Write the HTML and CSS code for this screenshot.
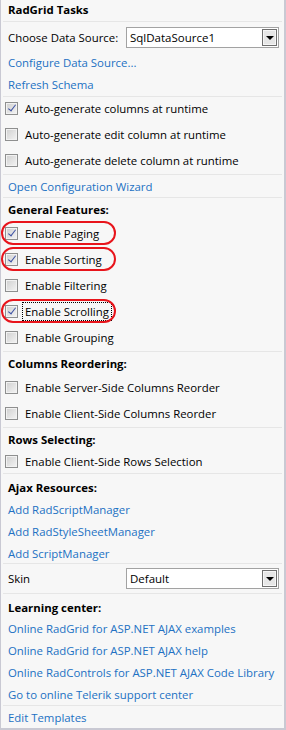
FILE: index.html
```html
<!DOCTYPE html>
<html lang="en">
<head>
    <meta charset="UTF-8">
    <title>RadGrid Tasks</title>
    <link rel="stylesheet" href="styles.css">
</head>
<body>
<div class="panel">
    <div class="title">RadGrid Tasks</div>

    <!-- Origen de datos -->
    <div class="group g-source">
        <div class="field">
            <span class="field-label">Choose Data Source:</span>
            <div class="combo">
                <span class="combo-text">SqlDataSource1</span>
                <span class="combo-btn"><span class="arrow"></span></span>
            </div>
        </div>
        <a class="link" href="#">Configure Data Source...</a>
        <a class="link" href="#">Refresh Schema</a>
    </div>

    <div class="group g-auto">
        <label class="check"><span class="box on"></span><span class="text">Auto-generate columns at runtime</span></label>
        <label class="check"><span class="box"></span><span class="text">Auto-generate edit column at runtime</span></label>
        <label class="check"><span class="box"></span><span class="text">Auto-generate delete column at runtime</span></label>
    </div>

    <div class="group g-wizard">
        <a class="link" href="#">Open Configuration Wizard</a>
    </div>

    <div class="group g-features">
        <div class="head">General Features:</div>
        <label class="check marked"><span class="box on"></span><span class="text">Enable Paging</span></label>
        <label class="check marked"><span class="box on"></span><span class="text">Enable Sorting</span></label>
        <label class="check"><span class="box"></span><span class="text">Enable Filtering</span></label>
        <label class="check marked"><span class="box on"></span><span class="text focus">Enable Scrolling</span></label>
        <label class="check"><span class="box"></span><span class="text">Enable Grouping</span></label>
    </div>

    <div class="group g-reorder">
        <div class="head">Columns Reordering:</div>
        <label class="check"><span class="box"></span><span class="text">Enable Server-Side Columns Reorder</span></label>
        <label class="check"><span class="box"></span><span class="text">Enable Client-Side Columns Reorder</span></label>
    </div>

    <div class="group g-select">
        <div class="head">Rows Selecting:</div>
        <label class="check"><span class="box"></span><span class="text">Enable Client-Side Rows Selection</span></label>
    </div>

    <div class="group g-ajax">
        <div class="head">Ajax Resources:</div>
        <a class="link" href="#">Add RadScriptManager</a>
        <a class="link" href="#">Add RadStyleSheetManager</a>
        <a class="link" href="#">Add ScriptManager</a>
    </div>

    <div class="group g-skin">
        <div class="field">
            <span class="field-label">Skin</span>
            <div class="combo">
                <span class="combo-text">Default</span>
                <span class="combo-btn"><span class="arrow"></span></span>
            </div>
        </div>
    </div>

    <div class="group g-learn">
        <div class="head">Learning center:</div>
        <a class="link" href="#">Online RadGrid for ASP.NET AJAX examples</a>
        <a class="link" href="#">Online RadGrid for ASP.NET AJAX help</a>
        <a class="link" href="#">Online RadControls for ASP.NET AJAX Code Library</a>
        <a class="link" href="#">Go to online Telerik support center</a>
    </div>

    <div class="group g-edit">
        <a class="link" href="#">Edit Templates</a>
    </div>
</div>
</body>
</html>
```

FILE: styles.css
```css
body {
    margin: 0;
}
.panel {
    width: 286px;
    height: 730px;
    box-sizing: border-box;
    background: #f7f7f7;
    border-left: 1px solid #c9c9d3;
    border-right: 2px solid #c9c9d3;
    border-bottom: 2px solid #c9c9d3;
    font-family: "Open Sans", "Noto Sans", sans-serif;
    font-size: 11.4px;
    color: #000;
}
.title {
    height: 21px;
    line-height: 20px;
    padding-left: 7px;
    font-weight: bold;
}
.group {
    margin: 0 2px;
    border-top: 1px solid #e6e6e6;
}

/* filas */
.link,
.head,
.field {
    display: flex;
    align-items: center;
    height: 22px;
    padding-left: 5px;
}
.link {
    color: #2271c3;
    text-decoration: none;
}
.head {
    font-weight: bold;
}
.check {
    display: flex;
    align-items: center;
    height: 22px;
    padding-left: 2px;
    position: relative;
}
.check + .check {
    margin-top: 4px;
}
.head + .check {
    margin-top: 2px;
}
.check .text {
    line-height: 17px;
    padding: 0 2px;
    border: 1px solid transparent;
    margin-left: 4px;
}
.check .focus {
    border: 1px dotted #000;
}
.marked::after {
    content: "";
    position: absolute;
    left: -2px;
    top: -1px;
    width: 111px;
    height: 20px;
    border: 2px solid #e8141b;
    border-radius: 12px;
}

/* casilla */
.box {
    width: 11px;
    height: 11px;
    border: 1px solid #8e8f8f;
    background: linear-gradient(135deg, #cfcfcf, #f4f4f4);
    box-shadow: inset 0 0 0 1px #f2f2f2;
    position: relative;
    flex: none;
}
.box.on::after {
    content: "";
    position: absolute;
    left: 3.5px;
    top: 0.5px;
    width: 3px;
    height: 7px;
    border: solid #3d52a3;
    border-width: 0 1.5px 1.5px 0;
    transform: rotate(38deg);
}

/* combo */
.field-label {
    width: 118px;
    flex: none;
}
.combo {
    width: 151px;
    height: 19px;
    border: 1px solid #a2a2a2;
    background: #fff;
    display: flex;
    align-items: center;
    justify-content: space-between;
}
.combo-text {
    padding-left: 3px;
    font-size: 11.5px;
}
.combo-btn {
    width: 13px;
    height: 15px;
    margin-right: 1px;
    border: 1px solid #6f6f6f;
    background: #e6e6e6;
    box-shadow: inset 0 0 0 1px #f6f6f6;
    display: flex;
    align-items: center;
    justify-content: center;
}
.arrow {
    width: 0;
    height: 0;
    border-left: 4px solid transparent;
    border-right: 4px solid transparent;
    border-top: 4px solid #000;
    margin-top: 1px;
}

/* ajustes por grupo */
.g-source {
    padding: 3px 0 1px;
}
.g-source .field {
    height: 24px;
    margin-bottom: 2px;
}
.g-auto {
    padding-bottom: 3px;
}
.g-features,
.g-reorder {
    padding-bottom: 3px;
}
.g-select {
    padding-bottom: 1px;
}
.g-select .head + .check {
    margin-top: 0;
}
.g-ajax {
    padding-top: 3px;
}
.g-ajax .head,
.g-ajax .link {
    height: 20px;
}
.g-ajax .link {
    margin-top: 2px;
}
.g-skin {
    padding: 2px 0 3px;
}
.g-skin .field {
    height: 24px;
}
.g-learn {
    padding-top: 3px;
}
.g-learn .head {
    height: 20px;
}
```
